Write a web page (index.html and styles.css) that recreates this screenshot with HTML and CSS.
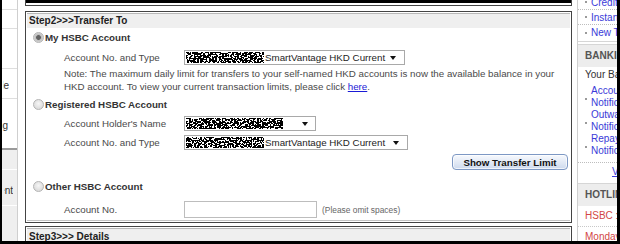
FILE: index.html
```html
<!DOCTYPE html>
<html lang="en">
<head>
<meta charset="utf-8">
<title>Transfer</title>
<link rel="stylesheet" href="styles.css">
</head>
<body>
<svg class="defs" width="0" height="0" aria-hidden="true">
  <filter id="px1" x="0" y="0" width="1" height="1" color-interpolation-filters="sRGB">
    <feTurbulence type="fractalNoise" baseFrequency="0.6" numOctaves="1" seed="3"/>
    <feColorMatrix type="matrix" values="1 0 0 0 -0.04  1 0 0 0 -0.04  1 0 0 0 -0.04  0 0 0 0 1"/>
    <feComponentTransfer>
      <feFuncR type="discrete" tableValues="0 1"/>
      <feFuncG type="discrete" tableValues="0 1"/>
      <feFuncB type="discrete" tableValues="0 1"/>
    </feComponentTransfer>
  </filter>
  <filter id="px2" x="0" y="0" width="1" height="1" color-interpolation-filters="sRGB">
    <feTurbulence type="fractalNoise" baseFrequency="0.6" numOctaves="1" seed="11"/>
    <feColorMatrix type="matrix" values="1 0 0 0 -0.04  1 0 0 0 -0.04  1 0 0 0 -0.04  0 0 0 0 1"/>
    <feComponentTransfer>
      <feFuncR type="discrete" tableValues="0 1"/>
      <feFuncG type="discrete" tableValues="0 1"/>
      <feFuncB type="discrete" tableValues="0 1"/>
    </feComponentTransfer>
  </filter>
  <filter id="px3" x="0" y="0" width="1" height="1" color-interpolation-filters="sRGB">
    <feTurbulence type="fractalNoise" baseFrequency="0.6" numOctaves="1" seed="27"/>
    <feColorMatrix type="matrix" values="1 0 0 0 -0.04  1 0 0 0 -0.04  1 0 0 0 -0.04  0 0 0 0 1"/>
    <feComponentTransfer>
      <feFuncR type="discrete" tableValues="0 1"/>
      <feFuncG type="discrete" tableValues="0 1"/>
      <feFuncB type="discrete" tableValues="0 1"/>
    </feComponentTransfer>
  </filter>
</svg>

<div class="frame">
  <aside class="lside">
    <div class="lcell h10"></div>
    <div class="lcell h19"></div>
    <div class="lcell h40"></div>
    <div class="lcell h30"><span class="clip c-e">Manage Profile</span></div>
    <div class="lcell h51 last"><span class="clip c-g">Standing</span></div>
    <div class="lcell h20 grey"></div>
    <div class="lcell h36 grey"><span class="clip c-nt">Bill Payment</span></div>
    <div class="lcell grow grey"></div>
  </aside>

  <main class="main">
    <div class="prev"></div>

    <section class="step">
      <h2 class="step-hd">Step2&gt;&gt;&gt;Transfer To</h2>
      <div class="step-bd">
        <div class="opt mt3"><span class="radio on"></span>My HSBC Account</div>
        <div class="field mt6">
          <span class="lbl">Account No. and Type</span>
          <div class="sel w221">
            <svg class="mask" width="78" height="11"><rect width="78" height="11" filter="url(#px1)"/></svg>
            <span class="sel-txt">SmartVantage HKD Current</span>
            <span class="arrow mr8"></span>
          </div>
        </div>
        <p class="note mt2">Note: The maximum daily limit for transfers to your self-named HKD accounts is now the available balance in your HKD account. To view your current transaction limits, please click <a href="#">here</a>.</p>

        <div class="opt mt5"><span class="radio"></span>Registered HSBC Account</div>
        <div class="field mt5">
          <span class="lbl">Account Holder's Name</span>
          <div class="sel w132">
            <svg class="mask" width="97" height="11"><rect width="97" height="11" filter="url(#px2)"/></svg>
            <span class="arrow mr7"></span>
          </div>
        </div>
        <div class="field mt4">
          <span class="lbl">Account No. and Type</span>
          <div class="sel w224">
            <svg class="mask" width="78" height="11"><rect width="78" height="11" filter="url(#px3)"/></svg>
            <span class="sel-txt">SmartVantage HKD Current</span>
            <span class="arrow mr8"></span>
          </div>
        </div>
        <div class="btn-row mt4"><button class="btn" type="button">Show Transfer Limit</button></div>

        <div class="opt mt10"><span class="radio"></span>Other HSBC Account</div>
        <div class="field mt8">
          <span class="lbl">Account No.</span>
          <div class="inp-wrap"><span class="inp"></span><span class="hint">(Please omit spaces)</span></div>
        </div>
      </div>
    </section>

    <section class="step step3">
      <h2 class="step-hd">Step3&gt;&gt;&gt; Details</h2>
    </section>
  </main>

  <aside class="rside">
    <ul class="rtop">
      <li><i class="dot"></i><a href="#">Credit Card</a></li>
      <li><i class="dot"></i><a href="#">Instant Transfer</a></li>
      <li><i class="dot"></i><a href="#">New Transfer</a></li>
    </ul>
    <div class="rbox">
      <h3 class="rhd">BANKING</h3>
      <p class="rtext">Your Banking Services</p>
      <ul class="rlist">
        <li><i class="dot"></i><a href="#">Account<br>Notification</a></li>
        <li><i class="dot"></i><a href="#">Outward<br>Notification</a></li>
        <li><i class="dot"></i><a href="#">Repayment<br>Notification</a></li>
      </ul>
      <a class="rview" href="#">View all</a>
    </div>
    <div class="rbox">
      <h3 class="rhd">HOTLINE</h3>
      <p class="red">HSBC : 2233 3000</p>
      <p class="red">Monday to Friday</p>
    </div>
  </aside>
</div>
</body>
</html>
```

FILE: styles.css
```css
* { box-sizing: border-box; margin: 0; padding: 0; }

html, body {
  width: 620px;
  height: 244px;
  overflow: hidden;
  background: #fff;
}

body {
  font-family: "Liberation Sans", Arial, sans-serif;
  font-size: 9.75px;
  color: #444;
}

.defs { position: absolute; width: 0; height: 0; }

.frame {
  display: flex;
  width: 620px;
  height: 244px;
  border-right: 3px solid #000;
  border-bottom: 3px solid #000;
  overflow: hidden;
}

/* ---------- left sidebar ---------- */
.lside {
  width: 18px;
  flex: none;
  margin-right: 7px;
  border-right: 1px solid #cfcfcf;
  border-left: 2px solid #000;
  display: flex;
  flex-direction: column;
}
.lcell {
  flex: none;
  border-bottom: 1px solid #dedede;
  display: flex;
  align-items: center;
  justify-content: flex-end;
  white-space: nowrap;
  font-size: 10px;
  color: #333;
}
.lcell.last { border-bottom: 2px solid #9a9a9a; }
.lcell.grey { background: #efefef; border-bottom-color: #fff; }
.lcell.grow { flex: 1; border-bottom: none; }
.h10 { height: 10px; }
.h19 { height: 19px; }
.h20 { height: 20px; }
.h30 { height: 30px; padding-top: 4px; }
.h36 { height: 36px; padding-top: 5px; }
.h40 { height: 40px; }
.h51 { height: 51px; padding-top: 3px; }

.clip {
  display: flex;
  justify-content: flex-end;
  overflow: hidden;
}
.c-e { width: 6px; margin-right: 8px; }
.c-g { width: 6px; margin-right: 9px; }
.c-nt { width: 9px; margin-right: 4px; }

/* ---------- main column ---------- */
.main {
  width: 547px;
  flex: none;
  margin-right: 5px;
  display: flex;
  flex-direction: column;
}

.prev {
  height: 6px;
  flex: none;
  border: 1px solid #444;
  border-top: none;
  background: linear-gradient(#000 0 3px, #fff 3px);
}

.step {
  margin-top: 5px;
  border: 1px solid #444;
  padding: 1px;
  flex: none;
}
.step3 { margin-top: 3px; }

.step-hd {
  height: 15px;
  border-top: 1px solid #b8b8b8;
  background: #efefef;
  font-size: 10px;
  font-weight: bold;
  color: #222;
  line-height: 14px;
  padding-left: 2px;
}
.step3 .step-hd { height: 20px; line-height: 16px; }

.step-bd {
  display: flex;
  flex-direction: column;
  padding-bottom: 2px;
  border-bottom: 1px solid #c4c4c4;
}

.mt2 { margin-top: 2px; }
.mt3 { margin-top: 3px; }
.mt4 { margin-top: 4px; }
.mt5 { margin-top: 5px; }
.mt6 { margin-top: 6px; }
.mt8 { margin-top: 8px; }
.mt10 { margin-top: 10px; }

.opt {
  display: flex;
  align-items: center;
  height: 13px;
  font-weight: bold;
  color: #333;
}
.radio {
  width: 11px;
  height: 11px;
  flex: none;
  border-radius: 50%;
  border: 1px solid #b4b4b4;
  background: radial-gradient(circle at 50% 40%, #f6f6f6, #d2d2d2);
  margin: 0 1px 0 6px;
}
.radio.on {
  background: radial-gradient(circle, #626262 0 2px, #bdbdbd 2.8px, #ececec 100%);
}

.field {
  display: grid;
  grid-template-columns: 120px auto;
  align-items: center;
  padding-left: 37px;
}
.lbl { color: #4a4a4a; }

.sel {
  height: 15px;
  border: 1px solid #a9a9a9;
  background: #fff;
  display: flex;
  align-items: center;
  padding-left: 1px;
  color: #222;
  white-space: nowrap;
}
.w221 { width: 221px; }
.w132 { width: 132px; }
.w224 { width: 224px; }
.mask { display: block; flex: none; }
.sel-txt { margin-left: 1px; }
.arrow {
  margin-left: auto;
  width: 0;
  height: 0;
  border-left: 3px solid transparent;
  border-right: 3px solid transparent;
  border-top: 4px solid #111;
}
.mr7 { margin-right: 7px; }
.mr8 { margin-right: 8px; }

.note {
  padding-left: 37px;
  line-height: 13px;
  color: #4a4a4a;
}
.note a { color: #1a1ad6; text-decoration: underline; }

.btn-row { display: flex; justify-content: flex-end; padding-right: 2px; }
.btn {
  width: 116px;
  height: 16px;
  border: 1px solid #7d98c4;
  border-radius: 4px;
  background: linear-gradient(#f7f9fd, #dfe7f4 60%, #cdd9ee);
  box-shadow: inset 0 0 0 1px rgba(255,255,255,.7);
  font: bold 9.75px "Liberation Sans", Arial, sans-serif;
  color: #111;
  padding: 0;
}

.inp-wrap { display: flex; align-items: center; }
.inp {
  width: 133px;
  height: 17px;
  border: 1px solid #bdbdbd;
  background: #fff;
}
.hint {
  margin-left: 5px;
  font-size: 8.4px;
  color: #666;
}

/* ---------- right sidebar ---------- */
.rside {
  width: 40px;
  flex: none;
  border-left: 1px solid #cfcfcf;
  white-space: nowrap;
  font-size: 10px;
}
.rside a { color: #3a3ad8; text-decoration: none; }
.dot {
  width: 2px;
  height: 2px;
  background: #9a9a9a;
  flex: none;
  margin: 0 4px 0 7px;
}
.rtop {
  list-style: none;
  margin-top: -5px;
  border-bottom: 1px solid #d6d6d6;
  padding-bottom: 1px;
}
.rtop li {
  display: flex;
  align-items: center;
  height: 15px;
  border-bottom: 1px dotted #bdbdbd;
}
.rtop li:last-child { border-bottom: none; }

.rbox { margin-top: 2px; border-top: 1px solid #d6d6d6; }
.rhd {
  height: 22px;
  line-height: 22px;
  background: #ededed;
  padding-left: 7px;
  font-size: 10px;
  font-weight: bold;
  color: #555;
}
.rtext {
  color: #333;
  padding: 2px 0 0 7px;
  line-height: 12px;
}
.rlist {
  list-style: none;
  margin-top: 4px;
  padding-bottom: 5px;
  border-bottom: 1px dotted #bdbdbd;
}
.rlist li {
  display: flex;
  align-items: center;
  line-height: 11.5px;
  margin-bottom: 1px;
}
.rlist .dot { align-self: center; margin-top: 5px; }
.rview {
  display: block;
  padding-left: 34px;
  height: 18px;
  line-height: 18px;
  text-decoration: underline !important;
}
.red {
  color: #d24646;
  padding-left: 7px;
  line-height: 20px;
  border-bottom: 1px dotted #c8c8c8;
}
.red:last-child { border-bottom: none; }
```
